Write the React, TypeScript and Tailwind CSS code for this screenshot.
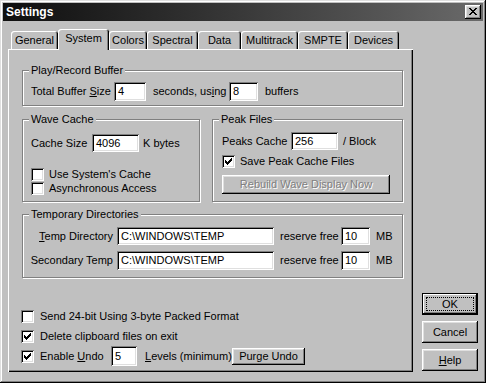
import React from "react";

const raised =
  "shadow-[inset_-1px_-1px_0_#000,inset_1px_1px_0_#fff,inset_-2px_-2px_0_#808080,inset_2px_2px_0_#dfdfdf]";
const sunken =
  "shadow-[inset_1px_1px_0_#808080,inset_-1px_-1px_0_#fff,inset_2px_2px_0_#000,inset_-2px_-2px_0_#dfdfdf]";

function Field({ value, className }: { value: string; className: string }) {
  return (
    <div className={`${sunken} flex shrink-0 items-center bg-white pl-[4px] leading-none text-black ${className}`}>
      {value}
    </div>
  );
}

function Check({ checked }: { checked?: boolean }) {
  return (
    <div className={`${sunken} h-[13px] w-[13px] shrink-0 bg-white`}>
      {checked && (
        <svg width="13" height="13" viewBox="0 0 13 13" shapeRendering="crispEdges">
          <path
            d="M3 5h1v1h1v1h1v-1h1v-1h1v-1h1v-1h1v3h-1v1h-1v1h-1v1h-1v1h-1v-1h-1v-1h-1z"
            fill="#000"
          />
        </svg>
      )}
    </div>
  );
}

function Group({
  label,
  className,
  children,
}: {
  label: string;
  className: string;
  children?: React.ReactNode;
}) {
  return (
    <div
      className={`relative shrink-0 border border-[#808080] shadow-[inset_1px_1px_0_#fff,1px_1px_0_#fff] ${className}`}
    >
      <span className="absolute -top-[8px] left-[6px] bg-[#c0c0c0] px-[2px] leading-[14px]">
        {label}
      </span>
      {children}
    </div>
  );
}

const tabs = [
  { name: "General", w: "w-[47px]" },
  { name: "System", w: "w-[51px]", active: true },
  { name: "Colors", w: "w-[38px]" },
  { name: "Spectral", w: "w-[51px]" },
  { name: "Data", w: "w-[43px]" },
  { name: "Multitrack", w: "w-[57px]" },
  { name: "SMPTE", w: "w-[50px]" },
  { name: "Devices", w: "w-[51px]" },
];

export default function App() {
  return (
    <div className="flex h-[383px] w-[486px] flex-col whitespace-nowrap bg-[#c0c0c0] p-[3px] font-['Liberation_Sans',Arial,sans-serif] text-[11px] text-black shadow-[inset_-1px_-1px_0_#000,inset_1px_1px_0_#dfdfdf,inset_-2px_-2px_0_#808080,inset_2px_2px_0_#fff]">
      {/* Title bar */}
      <div className="flex h-[18px] items-center justify-between bg-linear-to-r from-[#0f0f0f] to-[#6a6a6a] pl-[3px] pr-[2px]">
        <span className="text-[12px] font-bold text-white">Settings</span>
        <div className={`${raised} flex h-[14px] w-[16px] items-center justify-center bg-[#c0c0c0]`}>
          <svg width="16" height="14" viewBox="0 0 16 14" shapeRendering="crispEdges">
            <path
              d="M4 3h2v1h1v1h2v-1h1v-1h2v1h-1v1h-1v1h-1v1h1v1h1v1h1v1h-2v-1h-1v-1h-2v1h-1v1h-2v-1h1v-1h1v-1h1v-1h-1v-1h-1v-1h-1z"
              fill="#000"
            />
          </svg>
        </div>
      </div>

      <div className="mt-[8px] flex">
        {/* Tab control */}
        <div className="ml-[5px] flex w-[405px] flex-col">
          <div className="flex h-[20px] items-end pl-[3px]">
            {tabs.map((t) => (
              <div
                key={t.name}
                className={`${t.w} flex shrink-0 justify-center rounded-t-[3px] bg-[#c0c0c0] shadow-[inset_1px_1px_0_#fff,inset_-1px_0_0_#000,inset_-2px_0_0_#808080] ${
                  t.active
                    ? "relative z-10 -mb-[1px] h-[21px] pt-[3px]"
                    : "h-[18px] pt-[3px]"
                }`}
              >
                <span className="leading-[13px]">{t.name}</span>
              </div>
            ))}
          </div>

          <div className="flex h-[323px] flex-col pl-[14px] pt-[21px] shadow-[inset_1px_1px_0_#fff,inset_-1px_-1px_0_#000,inset_-2px_-2px_0_#808080]">
            <Group label="Play/Record Buffer" className="h-[36px] w-[381px] pl-[8px] pt-[11px]">
              <div className="flex items-center">
                <span className="w-[83px] shrink-0">
                  Total Buffer <u>S</u>ize
                </span>
                <Field value="4" className="h-[19px] w-[32px]" />
                <span className="ml-[7px] w-[76px] shrink-0">
                  seconds, us<u>i</u>ng
                </span>
                <Field value="8" className="h-[19px] w-[29px]" />
                <span className="ml-[7px]">buffers</span>
              </div>
            </Group>

            <div className="mt-[13px] flex gap-[12px]">
              <Group label="Wave Cache" className="h-[83px] w-[178px] pl-[8px] pt-[14px]">
                <div className="flex items-center">
                  <span className="w-[61px] shrink-0">Cache Size</span>
                  <Field value="4096" className="h-[18px] w-[47px]" />
                  <span className="ml-[4px]">K bytes</span>
                </div>
                <div className="mt-[16px] flex h-[13px] items-center">
                  <Check />
                  <span className="ml-[5px]">Use System's Cache</span>
                </div>
                <div className="mt-[1px] flex h-[13px] items-center">
                  <Check />
                  <span className="ml-[5px]">Asynchronous Access</span>
                </div>
              </Group>

              <Group label="Peak Files" className="h-[83px] w-[191px] pl-[9px] pt-[12px]">
                <div className="flex items-center">
                  <span className="w-[69px] shrink-0">Peaks Cache</span>
                  <Field value="256" className="h-[18px] w-[47px]" />
                  <span className="ml-[5px]">/ Block</span>
                </div>
                <div className="mt-[5px] flex h-[13px] items-center">
                  <Check checked />
                  <span className="ml-[5px]">Save Peak Cache Files</span>
                </div>
                <div
                  className={`${raised} mt-[7px] flex h-[19px] w-[168px] items-center justify-center text-[#808080] [text-shadow:1px_1px_0_#fff]`}
                >
                  Rebuild Wave Display Now
                </div>
              </Group>
            </div>

            <Group label="Temporary Directories" className="mt-[12px] h-[64px] w-[381px] pt-[12px]">
              <div className="flex items-center">
                <span className="w-[94px] shrink-0 pr-[4px] text-right">
                  <u>T</u>emp Directory
                </span>
                <Field value="C:\WINDOWS\TEMP" className="h-[18px] w-[157px]" />
                <span className="ml-[6px] w-[61px] shrink-0">reserve free</span>
                <Field value="10" className="h-[18px] w-[29px]" />
                <span className="ml-[6px]">MB</span>
              </div>
              <div className="mt-[6px] flex items-center">
                <span className="w-[94px] shrink-0 pr-[4px] text-right">Secondary Temp</span>
                <Field value="C:\WINDOWS\TEMP" className="h-[19px] w-[157px]" />
                <span className="ml-[6px] w-[61px] shrink-0">reserve free</span>
                <Field value="10" className="h-[19px] w-[29px]" />
                <span className="ml-[6px]">MB</span>
              </div>
            </Group>

            <div className="-ml-[1px] mt-[28px] flex flex-col">
              <div className="flex h-[20px] items-center">
                <Check />
                <span className="ml-[6px]">Send 24-bit Using 3-byte Packed Format</span>
              </div>
              <div className="flex h-[20px] items-center">
                <Check checked />
                <span className="ml-[6px]">Delete clipboard files on exit</span>
              </div>
              <div className="flex h-[20px] items-center">
                <Check checked />
                <span className="ml-[6px] w-[71px] shrink-0">
                  Enable <u>U</u>ndo
                </span>
                <Field value="5" className="h-[20px] w-[26px]" />
                <span className="ml-[8px] w-[87px] shrink-0">
                  <u>L</u>evels (minimum)
                </span>
                <div className={`${raised} flex h-[17px] w-[73px] items-center justify-center`}>
                  Purge Undo
                </div>
              </div>
            </div>
          </div>
        </div>

        {/* Dialog buttons */}
        <div className="ml-[9px] flex w-[56px] flex-col justify-end gap-[6px] pb-[1px]">
          <div className="flex h-[22px] items-center justify-center bg-[#c0c0c0] p-[4px] shadow-[inset_0_0_0_1px_#000,inset_-2px_-2px_0_#000,inset_2px_2px_0_#fff,inset_-3px_-3px_0_#808080]">
            <div className="flex h-full w-full items-center justify-center border border-dotted border-black">
              OK
            </div>
          </div>
          <div className={`${raised} flex h-[22px] items-center justify-center`}>Cancel</div>
          <div className={`${raised} flex h-[22px] items-center justify-center`}>
            <span>
              <u>H</u>elp
            </span>
          </div>
        </div>
      </div>
    </div>
  );
}
